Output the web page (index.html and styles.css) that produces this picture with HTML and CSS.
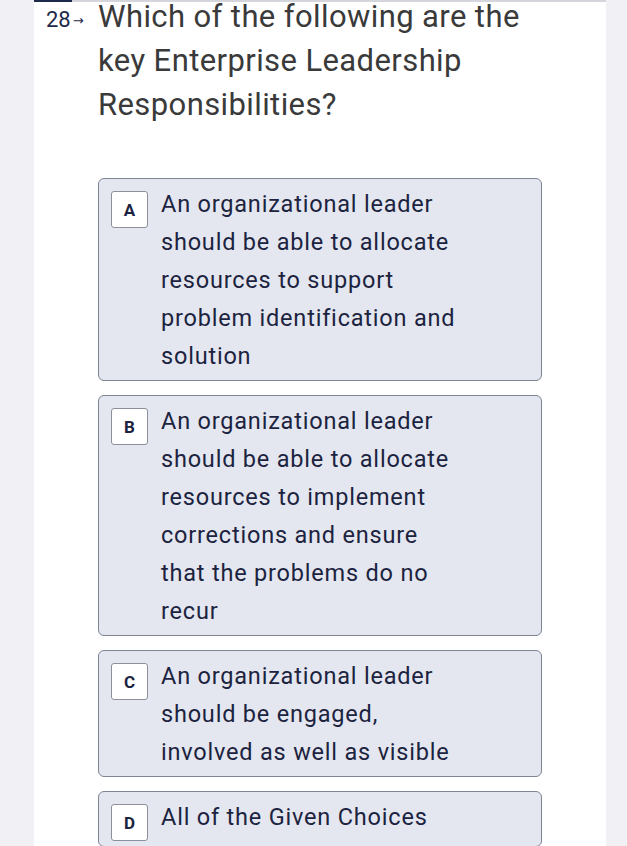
FILE: index.html
```html
<!DOCTYPE html>
<html lang="en">
<head>
<meta charset="utf-8">
<link rel="stylesheet" href="styles.css">
</head>
<body>
<main class="sheet">
  <div class="progress"><div class="progress-fill"></div></div>
  <div class="question">
    <div class="qnum">28<span class="arrow">→</span></div>
    <div class="qtext">Which of the following are the key Enterprise Leadership Responsibilities?</div>
  </div>
  <ul class="options">
    <li class="option"><span class="letter">A</span><span class="otext">An organizational leader should be able to allocate resources to support problem identification and solution</span></li>
    <li class="option"><span class="letter">B</span><span class="otext">An organizational leader should be able to allocate resources to implement corrections and ensure that the problems do no recur</span></li>
    <li class="option"><span class="letter">C</span><span class="otext">An organizational leader should be engaged, involved as well as visible</span></li>
    <li class="option"><span class="letter">D</span><span class="otext">All of the Given Choices</span></li>
  </ul>
</main>
</body>
</html>
```

FILE: styles.css
```css
html, body {
  margin: 0;
  padding: 0;
  background: #f0f0f5;
  height: 846px;
  overflow: hidden;
}
body {
  font-family: Roboto, "Liberation Sans", sans-serif;
}
.sheet {
  margin-left: 34px;
  width: 572px;
  height: 846px;
  background: #ffffff;
  display: flex;
  flex-direction: column;
}
.progress {
  height: 2px;
  background: #d4d6dc;
}
.progress-fill {
  width: 38px;
  height: 2px;
  background: #1e2a4a;
}
.question {
  display: flex;
  margin-top: -7px;
}
.qnum {
  flex: none;
  width: 64px;
  padding-left: 12px;
  padding-top: 3px;
  box-sizing: border-box;
  font-size: 22px;
  line-height: 44px;
  color: #1e2a4a;
  white-space: nowrap;
}
.arrow {
  font-family: "DejaVu Sans", sans-serif;
  font-size: 13px;
  margin-left: 2px;
  vertical-align: 2px;
}
.qtext {
  width: 444px;
  font-size: 31px;
  letter-spacing: 0.4px;
  line-height: 44px;
  color: #3a3a3a;
}
.options {
  list-style: none;
  margin: 51px 0 0 64px;
  padding: 0;
  width: 444px;
  display: flex;
  flex-direction: column;
  gap: 14px;
}
.option {
  display: flex;
  align-items: flex-start;
  gap: 13px;
  background: #e4e7ef;
  border: 1px solid #7e8494;
  border-radius: 6px;
  padding: 6px 12px 5px 12px;
}
.letter {
  flex: none;
  width: 35px;
  height: 35px;
  margin-top: 6px;
  background: #ffffff;
  border: 1px solid #8b909c;
  border-radius: 3px;
  display: flex;
  align-items: center;
  justify-content: center;
  font-size: 17px;
  font-weight: 700;
  color: #1c2340;
}
.otext {
  width: 302px;
  font-size: 23.5px;
  letter-spacing: 0.8px;
  line-height: 38px;
  color: #1c2340;
}
```
